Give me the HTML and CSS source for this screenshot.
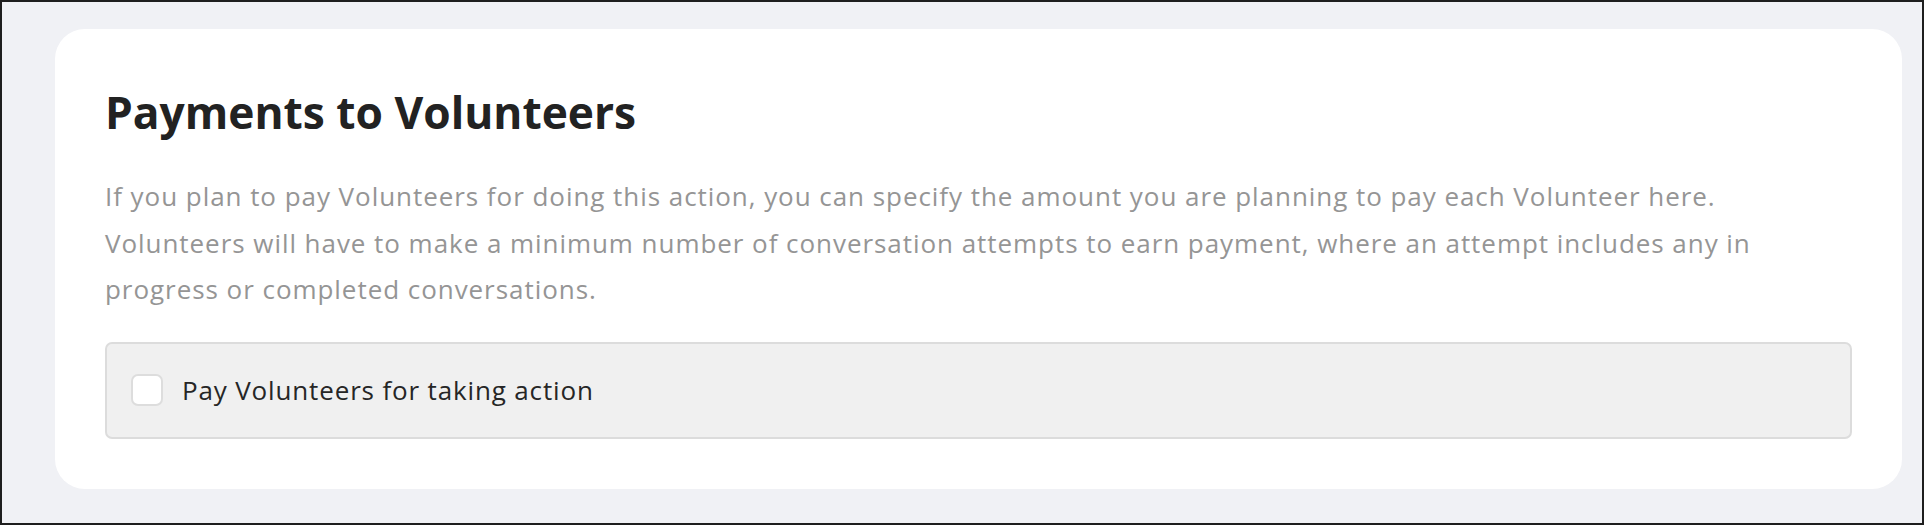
FILE: index.html
```html
<!DOCTYPE html>
<html lang="en">
<head>
<meta charset="utf-8">
<title>Payments to Volunteers</title>
<link rel="stylesheet" href="styles.css">
</head>
<body>
<div class="frame">
  <section class="card">
    <h2 class="card-title">Payments to Volunteers</h2>
    <p class="card-text">If you plan to pay Volunteers for doing this action, you can specify the amount you are planning to pay each Volunteer here.<br>Volunteers will have to make a minimum number of conversation attempts to earn payment, where an attempt includes any in progress or completed conversations.</p>
    <label class="option">
      <input type="checkbox" class="option-input">
      <span class="option-box"></span>
      <span class="option-label">Pay Volunteers for taking action</span>
    </label>
  </section>
</div>
</body>
</html>
```
FILE: styles.css
```css
* { box-sizing: border-box; }
html, body { margin: 0; padding: 0; background: #ffffff; }
body { font-family: "Open Sans", "Noto Sans", sans-serif; }

.frame {
  width: 1924px;
  height: 525px;
  border: 2px solid #1e1e1e;
  background: #f0f1f5;
  padding: 27px 20px 0 53px;
  display: flex;
  flex-direction: column;
  align-items: stretch;
}

.card {
  background: #ffffff;
  border-radius: 30px;
  padding: 57px 50px 50px 50px;
  display: flex;
  flex-direction: column;
}

.card-title {
  margin: 0;
  font-size: 44.3px;
  line-height: 52px;
  font-weight: 700;
  color: #222222;
}

.card-text {
  margin: 35px 0 0 0;
  font-size: 26px;
  line-height: 46.6px;
  letter-spacing: 0.95px;
  color: #959595;
}

.option {
  margin-top: 29px;
  height: 97px;
  border: 2px solid #dcdcdc;
  border-radius: 7px;
  background: #f0f0f0;
  display: flex;
  align-items: center;
  padding-left: 24px;
  gap: 19px;
}

.option-input {
  position: absolute;
  opacity: 0;
  width: 0;
  height: 0;
  margin: 0;
}

.option-box {
  width: 32px;
  height: 32px;
  border: 2px solid #dddddd;
  border-radius: 7px;
  background: #ffffff;
  flex: none;
}

.option-label {
  font-size: 26px;
  letter-spacing: 0.85px;
  color: #262626;
  line-height: 36px;
}
```
